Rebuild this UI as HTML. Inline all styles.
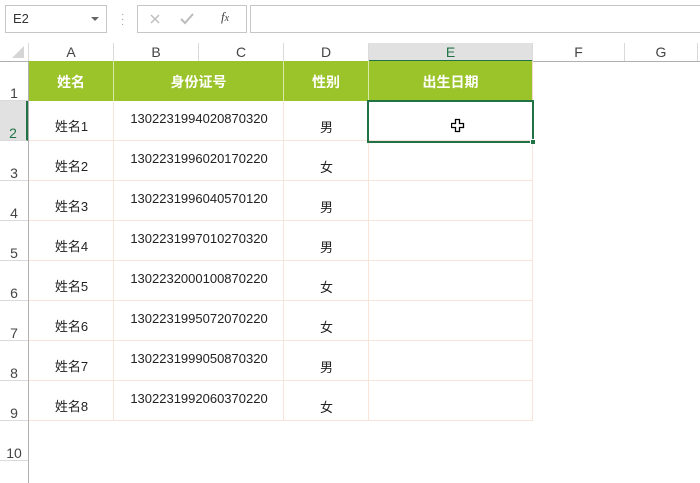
<!DOCTYPE html>
<html><head><meta charset="utf-8"><style>
*{margin:0;padding:0;box-sizing:border-box}
body{width:700px;height:483px;background:#fff;position:relative;overflow:hidden;font-family:"Liberation Sans","Noto Sans CJK SC",sans-serif;color:#222}
.a{position:absolute}
.ch{position:absolute;top:43px;height:18px;font-size:14px;color:#444;text-align:center;line-height:18px;border-right:1px solid #dadada}
.rh{position:absolute;left:0;width:28px;height:40px;border-bottom:1px solid #dadada;font-size:14px;color:#444;text-align:center;padding-top:24px}
.t{position:absolute;font-size:13px;text-align:center}
.hd{position:absolute;top:61px;height:40px;background:#9bc32a;color:#fff;font-weight:bold;font-size:14px;text-align:center;line-height:42px;border-right:1px solid #d8e8a8}
</style></head><body>
<div class="a" style="left:5px;top:5px;width:102px;height:28px;border:1px solid #c6c6c6;font-size:13px;line-height:26px;padding-left:7px;color:#333">E2</div>
<div class="a" style="left:91px;top:17px;width:0;height:0;border-left:4px solid transparent;border-right:4px solid transparent;border-top:4px solid #666"></div>
<div class="a" style="left:121px;top:12px;font-size:10px;color:#999;line-height:5px">·<br>·<br>·</div>
<div class="a" style="left:137px;top:5px;width:110px;height:28px;border:1px solid #c6c6c6"></div>
<svg class="a" style="left:150px;top:14px" width="10" height="10"><path d="M1 1L9 9M9 1L1 9" stroke="#bbb" stroke-width="1.3"/></svg>
<svg class="a" style="left:180px;top:13px" width="14" height="12"><path d="M1 6L5 10L13 1" stroke="#bbb" stroke-width="2" fill="none"/></svg>
<div class="a" style="left:221px;top:9px;font-size:13px;color:#444;font-style:italic;font-family:'Liberation Serif',serif">f<span style="font-size:10px">x</span></div>
<div class="a" style="left:250px;top:5px;width:460px;height:28px;border:1px solid #c6c6c6"></div>
<div class="a" style="left:0;top:61px;width:700px;height:1px;background:#b0b0b0"></div>
<div class="a" style="left:12px;top:46px;width:0;height:0;border-left:12px solid transparent;border-bottom:12px solid #d5d5d5"></div>
<div class="ch" style="left:0;width:29px"></div>
<div class="ch" style="left:29px;width:85px">A</div>
<div class="ch" style="left:114px;width:85px">B</div>
<div class="ch" style="left:199px;width:85px">C</div>
<div class="ch" style="left:284px;width:85px">D</div>
<div class="ch" style="left:369px;width:164px;background:#e1e1e1;color:#217346;border-bottom:2px solid #217346;height:19px">E</div>
<div class="ch" style="left:533px;width:92px">F</div>
<div class="ch" style="left:625px;width:73px">G</div>
<div class="a" style="left:28px;top:61px;width:1px;height:422px;background:#b0b0b0"></div>
<div class="rh" style="top:61px">1</div>
<div class="rh" style="top:101px;background:#e1e1e1;color:#217346;border-right:2px solid #217346">2</div>
<div class="rh" style="top:141px">3</div>
<div class="rh" style="top:181px">4</div>
<div class="rh" style="top:221px">5</div>
<div class="rh" style="top:261px">6</div>
<div class="rh" style="top:301px">7</div>
<div class="rh" style="top:341px">8</div>
<div class="rh" style="top:381px">9</div>
<div class="rh" style="top:421px">10</div>
<div class="hd" style="left:29px;width:85px">姓名</div>
<div class="hd" style="left:114px;width:170px">身份证号</div>
<div class="hd" style="left:284px;width:85px">性别</div>
<div class="hd" style="left:369px;width:164px;border-right:1px solid #f8d8c8">出生日期</div>
<div id="g"></div>
<script>
var names=['姓名1','姓名2','姓名3','姓名4','姓名5','姓名6','姓名7','姓名8'];
var ids=['1302231994020870320','1302231996020170220','1302231996040570120','1302231997010270320','1302232000100870220','1302231995072070220','1302231999050870320','1302231992060370220'];
var gs=['男','女','男','男','女','女','男','女'];
var h='';
for(var i=0;i<8;i++){var y=101+40*i;
h+='<div class="a" style="left:29px;top:'+(y+39)+'px;width:504px;height:1px;background:#f8e4d8"></div>';
h+='<div class="t" style="left:29px;width:85px;top:'+(y+15)+'px">'+names[i]+'</div>';
h+='<div class="t" style="left:114px;width:170px;top:'+(y+10)+'px">'+ids[i]+'</div>';
h+='<div class="t" style="left:284px;width:85px;top:'+(y+16)+'px">'+gs[i]+'</div>';}
[113,283,368,532].forEach(function(x){h+='<div class="a" style="left:'+x+'px;top:101px;width:1px;height:320px;background:#f8e4d8"></div>';});
document.getElementById('g').innerHTML=h;
</script>
<div class="a" style="left:367px;top:100px;width:167px;height:43px;border:2px solid #217346"></div>
<div class="a" style="left:530px;top:139px;width:6px;height:6px;background:#217346;border:1px solid #fff"></div>
<svg class="a" style="left:451px;top:118px" width="14" height="15" viewBox="0 0 14 15"><path d="M4.5 1.5h4v4h4v4h-4v4h-4v-4h-4v-4h4z" fill="#fff" stroke="#000" stroke-width="1.3"/></svg>
</body></html>
